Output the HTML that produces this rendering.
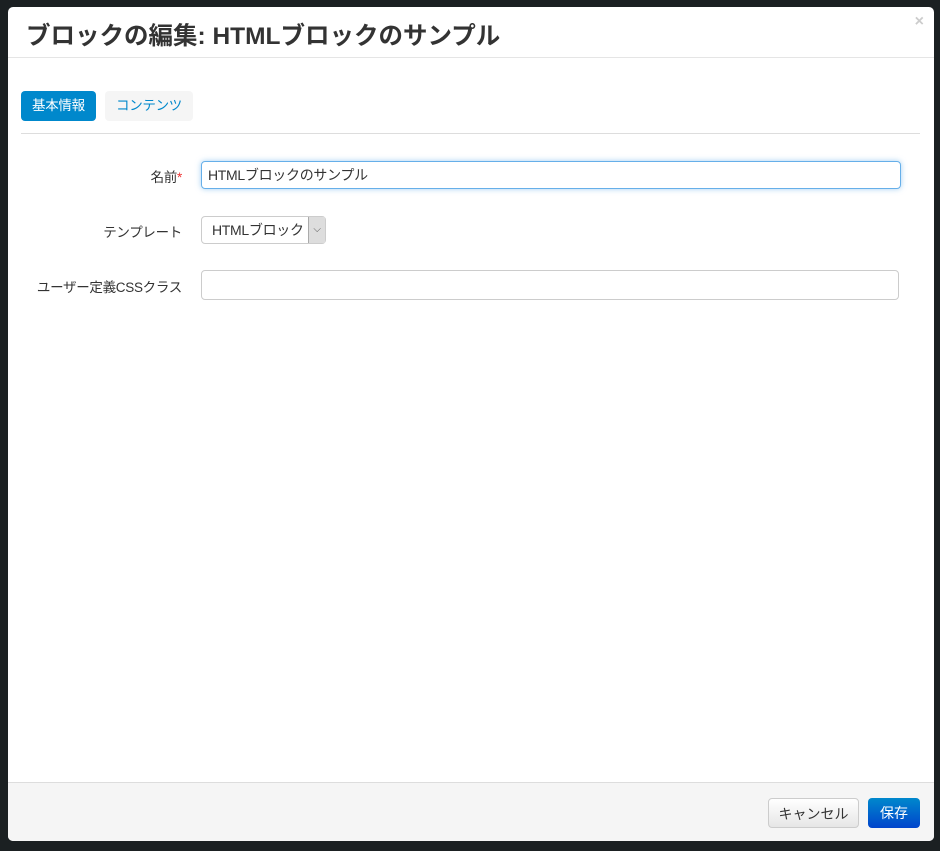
<!DOCTYPE html>
<html><head><meta charset="utf-8"><style>
body{margin:0;width:940px;height:851px;background:#1b2022;position:relative;overflow:hidden;font-family:"Liberation Sans","Noto Sans CJK JP",sans-serif;}
.m{position:absolute;left:8px;top:7px;width:926px;height:834px;background:#fff;border-radius:5px;overflow:hidden}
.h{height:50px;border-bottom:1px solid #e5e5e5;position:relative}
.h h3{margin:0;position:absolute;left:18px;top:10px;font-size:24.5px;font-weight:bold;color:#333}
.x{position:absolute;right:10px;top:6px;color:#ccc;font-size:16px;font-weight:bold}
.tab{position:absolute;top:84px;height:30px;line-height:30px;font-size:13.5px;border-radius:4px;padding:0 11px;letter-spacing:-0.3px}
.line{position:absolute;left:13px;top:126px;width:899px;height:1px;background:#ddd}
.lab{position:absolute;right:752px;font-size:13.5px;color:#333;letter-spacing:-0.3px}
.in{position:absolute;left:193px;height:28px;border:1px solid #ccc;border-radius:4px;box-sizing:border-box;font-size:14px;color:#333;line-height:26px;padding-left:6px;letter-spacing:-0.3px}
.f{position:absolute;left:0;top:775px;width:926px;height:59px;background:#f5f5f5;border-top:1px solid #ddd}
.b{position:absolute;top:15px;height:30px;line-height:30px;font-size:14px;border-radius:4px;text-align:center;box-sizing:border-box}
</style></head><body>
<div class="m">
<div class="h"><h3>ブロックの編集: HTMLブロックのサンプル</h3><span class="x">×</span></div>
<div class="tab" style="left:13px;background:#0088cc;color:#fff">基本情報</div>
<div class="tab" style="left:97px;background:#f5f5f5;color:#0088cc">コンテンツ</div>
<div class="line"></div>
<div class="lab" style="top:159px">名前<span style="color:#e33">*</span></div>
<div class="in" style="top:154px;width:700px;border-color:#66afe9;box-shadow:0 0 6px rgba(102,175,233,.6)">HTMLブロックのサンプル</div>
<div class="lab" style="top:214px">テンプレート</div>
<div class="in" style="top:209px;width:125px;padding-left:10px">HTMLブロック<span style="position:absolute;right:0;top:0;width:16px;height:26px;background:#ddd;border-left:1px solid #aaa;font-size:10px;text-align:center;color:#555">⌵</span></div>
<div class="lab" style="top:269px">ユーザー定義CSSクラス</div>
<div class="in" style="top:263px;width:698px;height:30px"></div>
<div class="f">
<div class="b" style="left:760px;width:91px;border:1px solid #ccc;background:linear-gradient(#fff,#e6e6e6);color:#333">キャンセル</div>
<div class="b" style="left:860px;width:52px;background:linear-gradient(#0088cc,#0044cc);color:#fff">保存</div>
</div>
</div>
</body></html>
